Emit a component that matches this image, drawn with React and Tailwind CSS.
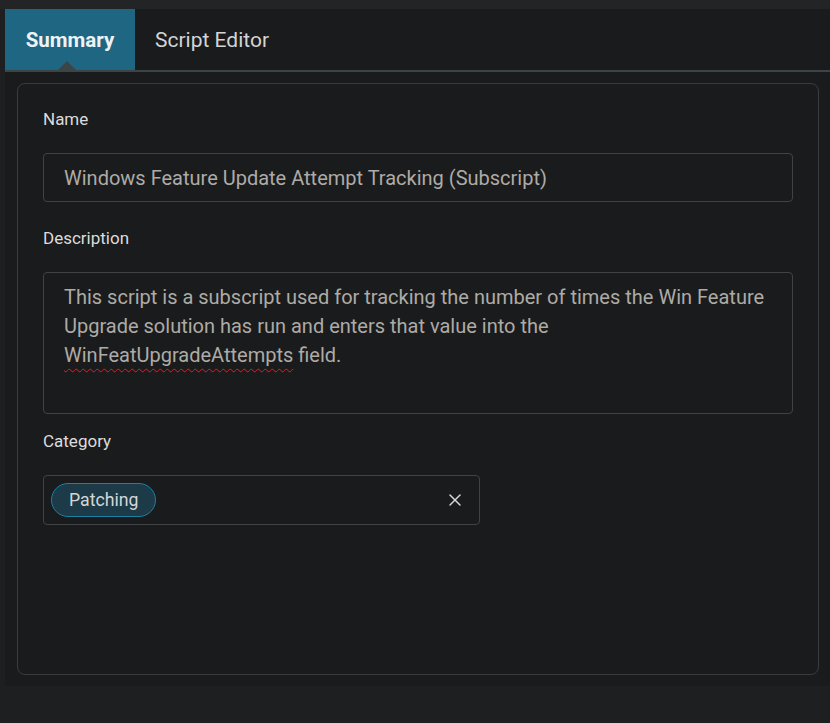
import { X } from 'lucide-react'

function Label({ children, className = '' }) {
  return <label className={`block text-[17px] text-[#dcdcdc] leading-[20px] ${className}`}>{children}</label>
}

export default function App() {
  return (
    <div className="w-[830px] h-[723px] bg-[#1e1f21] font-['Roboto',sans-serif]">
      <div className="h-[9px] bg-[#222426]" />
      <div className="ml-[5px] h-[677px] bg-[#1a1b1d] flex flex-col">
        {/* Tabs */}
        <div className="flex h-[63px] border-b-2 border-[#3d4446]">
          <button className="relative w-[130px] h-[61px] pt-[2px] bg-[#1e6682] text-[20.5px] font-bold text-[#eef2f4]">
            Summary
            <span className="absolute left-[53px] bottom-0 w-0 h-0 border-l-[9px] border-r-[9px] border-b-[9px] border-l-transparent border-r-transparent border-b-[#3d4446]" />
          </button>
          <button className="px-[20px] h-[61px] pt-[2px] text-[21px] text-[#d4d4d4]">Script Editor</button>
        </div>

        {/* Card */}
        <div className="mt-[11px] ml-[12px] w-[802px] h-[592px] border border-[#3a3b3d] rounded-[8px] px-[25px] pt-[25px]">
          <Label className="mb-[24px]">Name</Label>
          <div className="w-[750px] h-[49px] border border-[#414244] rounded-[4px] px-[20px] flex items-center text-[20px] text-[#aeaba6]">
            Windows Feature Update Attempt Tracking (Subscript)
          </div>

          <Label className="mt-[26px] mb-[24px]">Description</Label>
          <div className="w-[750px] h-[142px] border border-[#414244] rounded-[4px] pl-[20px] pr-[18px] pt-[10px] text-[20px] leading-[29px] text-[#aeaba6]">
            This script is a subscript used for tracking the number of times the Win Feature Upgrade solution has run and enters that value into the{' '}
            <span className="underline decoration-wavy decoration-[#e0201b] decoration-1 underline-offset-[6px]">WinFeatUpgradeAttempts</span> field.
          </div>

          <Label className="mt-[17px] mb-[24px]">Category</Label>
          <div className="w-[437px] h-[50px] border border-[#414244] rounded-[4px] pl-[7px] pr-[14px] flex items-center justify-between">
            <span className="h-[34px] px-[17px] rounded-full border border-[#1e7fa2] bg-[#1c3a48] flex items-center text-[17.7px] text-[#d6d6d6]">
              Patching
            </span>
            <X size={20} strokeWidth={1.8} className="text-[#d8d8d8]" />
          </div>
        </div>
      </div>
    </div>
  )
}
